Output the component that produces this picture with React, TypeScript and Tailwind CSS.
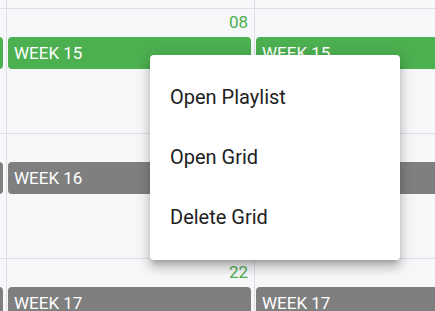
import React from "react";

type Ev = { label: string; color: "green" | "gray" };

const rows: { nums: string[]; ev: Ev }[] = [
  { nums: ["01", "08", "09"], ev: { label: "WEEK 15", color: "green" } },
  { nums: ["14", "15", "16"], ev: { label: "WEEK 16", color: "gray" } },
  { nums: ["21", "22", "23"], ev: { label: "WEEK 17", color: "gray" } },
];

const colW = ["w-[7px]", "w-[248px]", "w-[248px]"];

function Cell({ num, ev, ci }: { num: string; ev: Ev; ci: number }) {
  return (
    <div className={`${colW[ci]} shrink-0 h-[125px] border-r border-b border-[#dedfe2] pt-[1px] overflow-hidden flex flex-col`}>
      <div className={`h-6 leading-6 text-[17px] text-right pr-[6px] text-[#4caf50] ${ci === 0 ? "invisible" : ""}`}>{num}</div>
      <div
        className={`mt-[3px] h-8 ${ci === 0 ? "-ml-[240px] mr-[3px]" : "ml-[1px] mr-[3px]"} rounded-[4px] text-white text-[17px] leading-8 pl-[6px] whitespace-nowrap ${
          ev.color === "green" ? "bg-[#4caf50]" : "bg-[#7f7f7f]"
        }`}
      >
        {ev.label}
      </div>
    </div>
  );
}

export default function App() {
  return (
    <div
      className="relative w-[435px] h-[311px] overflow-hidden bg-[#f6f7f9]"
      style={{ fontFamily: "Roboto, 'Liberation Sans', sans-serif" }}
    >
      <div className="flex flex-col w-[503px]">
        <div className="flex h-[9px]">
          {colW.map((w, i) => (
            <div key={i} className={`${w} shrink-0 h-[9px] border-r border-b border-[#dedfe2]`} />
          ))}
        </div>
        {rows.map((r, ri) => (
          <div key={ri} className="flex">
            {r.nums.map((n, ci) => (
              <Cell key={ci} num={n} ev={r.ev} ci={ci} />
            ))}
          </div>
        ))}
      </div>

      <div className="absolute left-[150px] top-[55px] w-[250px] h-[205px] bg-white rounded-[4px] pt-3 shadow-[0_5px_5px_-3px_rgba(0,0,0,0.2),0_8px_10px_1px_rgba(0,0,0,0.14),0_3px_14px_2px_rgba(0,0,0,0.12)]">
        {["Open Playlist", "Open Grid", "Delete Grid"].map((t) => (
          <div key={t} className="h-[60px] flex items-center pl-5 text-[20px] text-[#212121]">
            {t}
          </div>
        ))}
      </div>
    </div>
  );
}
